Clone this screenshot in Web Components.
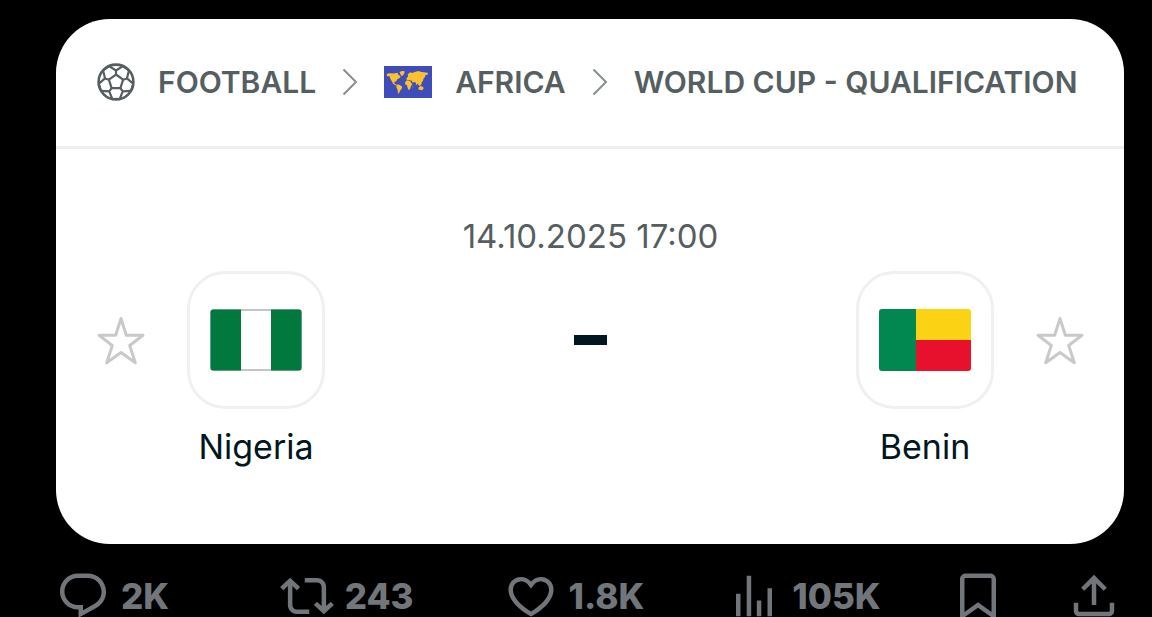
<!DOCTYPE html>
<html lang="en">
<head>
<meta charset="utf-8">
<meta name="viewport" content="width=device-width, initial-scale=1">
<title>Nigeria - Benin</title>
<style>
  html { background: #000; scrollbar-width: none; }
  body { margin: 0; font-family: Inter, "Liberation Sans", sans-serif; }
</style>
</head>
<body>
<match-post></match-post>
<script>
const define = (name, html) => {
  const template = document.createElement('template');
  template.innerHTML = html;
  customElements.define(name, class extends HTMLElement {
    constructor() {
      super();
      this.attachShadow({ mode: 'open' }).append(template.content.cloneNode(true));
    }
  });
};

/* Line-art football: one sector repeated five times */
define('ball-icon', `
  <style>:host { display: block; } svg { display: block; width: 38px; height: 38px; }</style>
  <svg viewBox="0 0 38 38" fill="none" stroke="#555e61" stroke-width="2.2" stroke-linecap="round" stroke-linejoin="round" aria-hidden="true">
    <defs><path id="s" d="M26.100 16.700L19 11.500V7.500M12.800 3.600L19 7.500l6.200-3.900M27.500 4.200l4.300 3.100"/></defs>
    <circle cx="19" cy="19" r="17.400" stroke-width="2.600"/>
    <use href="#s"/><use href="#s" transform="rotate(72 19 19)"/><use href="#s" transform="rotate(144 19 19)"/>
    <use href="#s" transform="rotate(216 19 19)"/><use href="#s" transform="rotate(288 19 19)"/>
  </svg>`);

define('chevron-icon', `
  <style>:host { display: block; } svg { display: block; width: 16px; height: 28px; }</style>
  <svg viewBox="0 0 16 28" fill="none" stroke="#888e90" stroke-width="2" aria-hidden="true"><path d="M1.500 1.500L14 14 1.500 26.500"/></svg>`);

define('world-flag', `
  <style>:host { display: block; } svg { display: block; width: 48px; height: 32px; }</style>
  <svg viewBox="0 0 48 32" aria-hidden="true">
    <path fill="#3f4db8" d="M0 0h48v32H0z"/>
    <g fill="#fdc02f">
      <path d="M2.500 8.500l2-1.300 5.500.3 3.500-.8 1 2.300 2.200 1-.8 1.800-2.600 1.500-1 2-1.800.4-.2 1.700 2 1 1 1.200-1.400-.2-2.800-1.700-1.400-2.600-1.400-2.300-.8-2.800-2 .4z"/>
      <path d="M12.800 18.800l2-.4 3.400 2-.6 2.700-1.600 1.600-1 2.500-1 .3-.3-3.300-1.300-2.900z"/>
      <path d="M15.500 6l2.300-1 3 .3-.8 2.600-2 2.300-1.400-1.700z"/>
      <path d="M22.500 12.300l1.600-1.800-.4-2.300 2.500-2 2 .7 2.700-1 3.300-1 3.500 1 6 .8.400 1.500-2.700 1-.4 1.700-1.300 1.400-.8 2.700-1.400 1.400.2 1.600-1.500 1.500.5 1.700-1.500-1.700-1.300-2.300-1.200 2-1.500-3.300-2.500.7-1.300-2.100-2.600-.6-2 .7z"/>
      <path d="M21 16.200l1.700-1.700 3.300.3 1.600 2.700 1 .6-1.600 2-.8 2.600-1.400 1.500-1.200-2.400-.6-2.600-1.700-.8z"/>
      <path d="M34.500 21.500l2.200-1.600 2.500 1 .4 2-1.800 1.400-3.300-.7z"/>
      <path d="M33.800 17.600l2 1.200-1 .5zM28.800 20.200l.6.300-.6 1.800z"/>
    </g>
  </svg>`);

define('nigeria-flag', `
  <style>:host { display: block; } svg { display: block; width: 92px; height: 62px; }</style>
  <svg viewBox="0 0 92 62" role="img" aria-label="Flag of Nigeria">
    <rect x="1" y="1" width="90" height="60" rx="2" fill="#fff" stroke="#858c88"/>
    <path fill="#00783e" d="M3 .5h28v61H3A2.500 2.500 0 0 1 .5 59V3A2.500 2.500 0 0 1 3 .5zM61 .5h28A2.500 2.500 0 0 1 91.500 3v56a2.500 2.500 0 0 1-2.500 2.500H61z"/>
  </svg>`);

define('benin-flag', `
  <style>:host { display: block; } svg { display: block; width: 92px; height: 62px; border-radius: 3px; }</style>
  <svg viewBox="0 0 92 62" role="img" aria-label="Flag of Benin">
    <path fill="#008850" d="M0 0h37v62H0z"/><path fill="#fcd215" d="M37 0h55v31H37z"/><path fill="#e8112d" d="M37 31h55v31H37z"/>
  </svg>`);

define('favorite-button', `
  <style>
    :host { display: block; }
    button { display: block; padding: 0; border: 0; background: none; cursor: pointer; }
    svg { display: block; width: 48px; height: 50px; }
  </style>
  <button type="button" aria-label="Add to favorites">
    <svg viewBox="0 0 48 50" fill="none" stroke="#c8caca" stroke-width="3" stroke-linejoin="round">
      <path d="M24 2.500l5.300 16.800H46L32.700 29.500l5.600 17.300L24 36.500 9.700 46.800l5.600-17.300L2 19.300h16.700z"/>
    </svg>
  </button>`);

define('event-breadcrumb', `
  <style>
    :host { display: block; border-bottom: 3px solid #eeeeee; }
    nav { display: flex; align-items: center; gap: 26px; height: 127px; padding: 0 41px 2px; box-sizing: border-box; }
    a { display: flex; align-items: center; gap: 23px; color: #555e61; text-decoration: none; font-size: 30px; line-height: 36px; font-weight: 600; white-space: nowrap; }
  </style>
  <nav aria-label="Competition">
    <a href="#football"><ball-icon></ball-icon><span>FOOTBALL</span></a>
    <chevron-icon></chevron-icon>
    <a href="#africa"><world-flag></world-flag><span>AFRICA</span></a>
    <chevron-icon></chevron-icon>
    <a href="#qualification"><span>WORLD CUP - QUALIFICATION</span></a>
  </nav>`);

define('team-card', `
  <style>
    :host { display: flex; flex-direction: column; align-items: center; gap: 18px; width: 138px; }
    .crest { display: grid; place-items: center; box-sizing: border-box; width: 138px; height: 138px; border: 3px solid #f0f0f0; border-radius: 38px; }
    .name { font-size: 34px; line-height: 40px; color: #001620; }
  </style>
  <div class="crest"><slot name="flag"></slot></div>
  <div class="name"><slot></slot></div>`);

define('match-summary', `
  <style>
    :host { display: block; padding: 67px 40px 77px 41px; }
    time { display: block; text-align: center; font-size: 33px; line-height: 40px; color: #555e61; }
    .row { display: grid; grid-template-columns: auto auto 1fr auto auto; column-gap: 42px; margin-top: 15px; }
    favorite-button { margin-top: 45px; }
    .score { display: grid; place-items: center; height: 138px; }
    .score i { width: 33px; height: 10px; background: #001620; }
  </style>
  <time datetime="2025-10-14T17:00">14.10.2025 17:00</time>
  <div class="row">
    <favorite-button></favorite-button>
    <team-card><nigeria-flag slot="flag"></nigeria-flag>Nigeria</team-card>
    <div class="score" role="img" aria-label="Not started"><i></i></div>
    <team-card><benin-flag slot="flag"></benin-flag>Benin</team-card>
    <favorite-button></favorite-button>
  </div>`);

define('match-card', `
  <style>:host { display: block; background: #fff; border-radius: 54px; overflow: hidden; }</style>
  <event-breadcrumb></event-breadcrumb>
  <match-summary></match-summary>`);

const ICONS = {
  reply: 'M1.751 10c0-4.42 3.584-8 8.005-8h4.366c4.49 0 8.129 3.64 8.129 8.13 0 2.960-1.607 5.680-4.196 7.110l-8.054 4.460v-3.690h-.067c-4.490.1-8.183-3.510-8.183-8.010zm8.005-6c-3.317 0-6.005 2.690-6.005 6 0 3.370 2.770 6.080 6.138 6.010l.351-.01h1.761v2.300l5.087-2.810c1.951-1.080 3.163-3.130 3.163-5.360 0-3.390-2.744-6.130-6.129-6.130H9.756z',
  repost: 'M4.500 3.880l4.432 4.140-1.364 1.460L5.500 7.550V16c0 1.100.896 2 2 2H13v2H7.500c-2.209 0-4-1.790-4-4V7.550L1.432 9.480.068 8.020 4.500 3.880zM16.500 6H11V4h5.500c2.209 0 4 1.790 4 4v8.450l2.068-1.930 1.364 1.460-4.432 4.140-4.432-4.140 1.364-1.460 2.068 1.930V8c0-1.100-.896-2-2-2z',
  like: 'M16.697 5.500c-1.222-.06-2.679.51-3.890 2.160l-.805 1.090-.806-1.090C9.984 6.010 8.526 5.440 7.304 5.500c-1.243.07-2.349.78-2.910 1.910-.552 1.120-.633 2.780.479 4.820 1.074 1.970 3.257 4.270 7.129 6.610 3.870-2.340 6.052-4.640 7.126-6.610 1.111-2.040 1.030-3.700.477-4.820-.561-1.130-1.666-1.840-2.908-1.910zm4.187 7.690c-1.351 2.480-4.001 5.120-8.379 7.670l-.503.3-.504-.3c-4.379-2.550-7.029-5.190-8.382-7.670-1.360-2.500-1.410-4.860-.514-6.670.887-1.790 2.647-2.910 4.601-3.010 1.651-.09 3.368.56 4.798 2.010 1.429-1.450 3.146-2.100 4.796-2.010 1.954.1 3.714 1.220 4.601 3.010.896 1.810.846 4.170-.514 6.670z',
  views: 'M8.750 21V3h2v18h-2zM18 21V8.500h2V21h-2zM4 21l.004-10h2L6 21H4zm9.248 0v-7h2v7h-2z',
  bookmark: 'M4 4.500C4 3.120 5.119 2 6.500 2h11C18.881 2 20 3.120 20 4.500v18.440l-8-5.710-8 5.710V4.500zM6.500 4c-.276 0-.5.220-.5.5v14.560l6-4.290 6 4.290V4.500c0-.28-.224-.5-.5-.5h-11z',
  share: 'M12 2.590l5.700 5.700-1.410 1.420L13 6.410V16h-2V6.410l-3.300 3.300-1.410-1.420L12 2.590zM21 15l-.02 3.510c0 1.380-1.120 2.490-2.500 2.490H5.500C4.110 21 3 19.880 3 18.500V15h2v3.500c0 .28.22.5.5.5h12.980c.28 0 .5-.22.5-.5L19 15h2z'
};

customElements.define('post-action', class extends HTMLElement {
  connectedCallback() {
    if (this.shadowRoot) return;
    const icon = this.getAttribute('icon');
    this.attachShadow({ mode: 'open' }).innerHTML = `
      <style>
        :host { display: block; }
        button { display: flex; align-items: center; gap: 11px; padding: 0; border: 0; background: none; cursor: pointer;
          color: #71767b; font: 800 35px/40px Inter, "Liberation Sans", sans-serif; }
        svg { display: block; flex: none; width: 54px; height: 54px; fill: currentColor; }
      </style>
      <button type="button" aria-label="${icon}"><svg viewBox="0 0 24 24" aria-hidden="true"><path d="${ICONS[icon]}"/></svg><slot></slot></button>`;
  }
});

define('post-actions', `
  <style>:host { display: grid; grid-template-columns: repeat(4, 1fr) 116px 54px; }</style>
  <post-action icon="reply">2K</post-action>
  <post-action icon="repost">243</post-action>
  <post-action icon="like">1.8K</post-action>
  <post-action icon="views">105K</post-action>
  <post-action icon="bookmark"></post-action>
  <post-action icon="share"></post-action>`);

define('match-post', `
  <style>
    :host { display: block; padding: 19px 28px 0 56px; }
    post-actions { margin: 25px 3px 0 0; }
  </style>
  <match-card></match-card>
  <post-actions></post-actions>`);
</script>
</body>
</html>
